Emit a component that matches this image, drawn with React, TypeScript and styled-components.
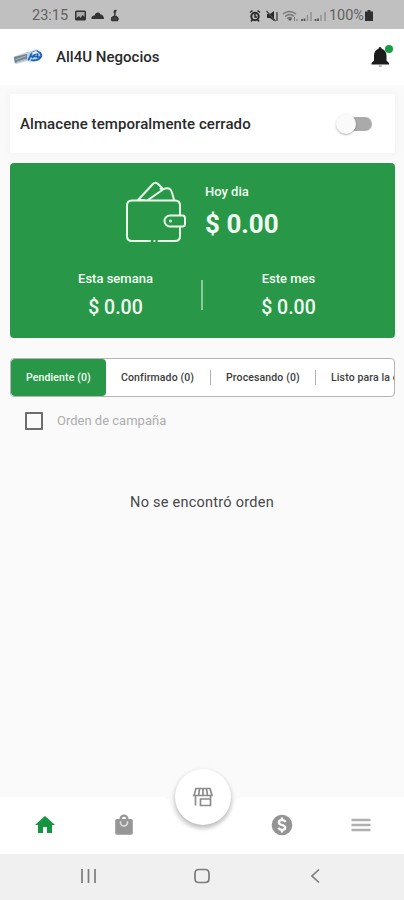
import React from "react";
import styled, { createGlobalStyle } from "styled-components";

const GREEN = "#289848";

const GlobalStyle = createGlobalStyle`
  * { box-sizing: border-box; }
  html, body { margin: 0; padding: 0; }
  body { font-family: Roboto, "Liberation Sans", sans-serif; color: #1d1d1d; background: #fafafa; }
`;

const Screen = styled.div`
  width: 404px;
  height: 900px;
  display: flex;
  flex-direction: column;
  background: #fafafa;
  overflow: hidden;
`;

const StatusBar = styled.header`
  height: 29px;
  flex: none;
  display: flex;
  align-items: center;
  justify-content: space-between;
  padding: 2px 31px 0 32px;
  background: #c0c0c0;
  color: #606060;
  font-size: 14.5px;
`;

const StatusGroup = styled.div<{ $gap: number }>`
  display: flex;
  align-items: center;
  gap: ${(p) => p.$gap}px;
`;

const StatusText = styled.span`
  line-height: 18px;
`;

const TitleBar = styled.div`
  height: 56px;
  flex: none;
  display: flex;
  align-items: center;
  padding: 0 11px 0 13px;
  background: #fff;
`;

const Title = styled.h1`
  flex: 1;
  margin: 0 0 0 12px;
  font-size: 15px;
  font-weight: 500;
  line-height: 20px;
  letter-spacing: 0.02px;
  color: #2a2a2a;
`;

const BellButton = styled.div`
  position: relative;
  width: 24px;
  height: 24px;
`;

const BellDot = styled.span`
  position: absolute;
  top: 0;
  right: 0;
  width: 8px;
  height: 8px;
  border-radius: 50%;
  background: #159d43;
`;

const Content = styled.main`
  flex: 1;
  display: flex;
  flex-direction: column;
  padding: 9px 9px 0 10px;
`;

const StoreCard = styled.section`
  height: 59px;
  display: flex;
  align-items: center;
  justify-content: space-between;
  padding: 0 23px 0 10px;
  background: #fff;
  border-radius: 2px;
  box-shadow: 0 0 6px 2px #f4f4f4;
  font-size: 15px;
  font-weight: 500;
  letter-spacing: 0.08px;
  color: #2a2a2a;
`;

const Track = styled.div`
  position: relative;
  width: 33px;
  height: 14px;
  border-radius: 7px;
  background: #aaa;
`;

const Knob = styled.span`
  position: absolute;
  left: -3px;
  top: -3px;
  width: 20px;
  height: 20px;
  border-radius: 50%;
  background: #fafafa;
  box-shadow: 0 1px 2px rgba(0, 0, 0, 0.3);
`;

const Earnings = styled.section`
  height: 175px;
  margin-top: 10px;
  padding-top: 17px;
  border-radius: 4px;
  background: ${GREEN};
  color: #f2fff2;
`;

const Today = styled.div`
  display: flex;
  height: 66px;
  padding-left: 115px;
  gap: 18px;
`;

const Amounts = styled.div<{ $align: string }>`
  display: flex;
  flex-direction: column;
  align-items: ${(p) => p.$align};
`;

const AmountLabel = styled.span`
  font-size: 13px;
  font-weight: 500;
  line-height: 16px;
  margin-top: 4px;
`;

const Amount = styled.span<{ $big?: boolean }>`
  font-size: ${(p) => (p.$big ? 26 : 19.5)}px;
  font-weight: ${(p) => (p.$big ? 700 : 500)};
  line-height: ${(p) => (p.$big ? 34 : 24)}px;
  margin-top: ${(p) => (p.$big ? 7 : 9)}px;
`;

const Periods = styled.div`
  display: grid;
  grid-template-columns: 1fr 2px 1fr;
  padding: 21px 21px 0 20px;
`;

const PeriodDivider = styled.span`
  height: 30px;
  margin-top: 13px;
  background: #8acb9a;
`;

const Tabs = styled.nav`
  width: 385px;
  height: 39px;
  margin-top: 20px;
  flex: none;
  display: flex;
  overflow: hidden;
  border: 1px solid #b5b5b5;
  border-radius: 4px;
  background: #fff;
`;

const Tab = styled.div<{ $active?: boolean; $width: number }>`
  flex: none;
  display: flex;
  align-items: center;
  width: ${(p) => p.$width}px;
  padding-left: 15px;
  white-space: nowrap;
  font-size: 10.5px;
  font-weight: 500;
  letter-spacing: 0.13px;
  border-radius: ${(p) => (p.$active ? 4 : 0)}px;
  background: ${(p) => (p.$active ? GREEN : "transparent")};
  color: ${(p) => (p.$active ? "#f4fff4" : "#3c3c3c")};
`;

const TabDivider = styled.span`
  align-self: center;
  flex: none;
  width: 1px;
  height: 15px;
  background: #b0b0b0;
`;

const CampaignRow = styled.div`
  display: flex;
  align-items: center;
  height: 47px;
  padding-left: 15px;
  gap: 14px;
  color: #adadad;
  font-size: 13px;
`;

const CheckBox = styled.span`
  width: 18px;
  height: 18px;
  border: 2px solid #6d6d6d;
  border-radius: 1px;
`;

const Empty = styled.p`
  margin: 49px 1px 0 0;
  text-align: center;
  font-size: 14.5px;
  line-height: 20px;
  color: #484848;
  letter-spacing: 0.25px;
`;

const BottomBar = styled.nav`
  position: relative;
  height: 57px;
  flex: none;
  display: grid;
  grid-template-columns: repeat(5, 1fr);
  place-items: center;
  padding: 0 4px 2px 6px;
`;

const BarShape = styled.svg`
  position: absolute;
  inset: 0;
`;

const NavItem = styled.div`
  position: relative;
  display: flex;
`;

const StoreButton = styled.div`
  position: relative;
  top: -28px;
  width: 56px;
  height: 56px;
  display: flex;
  align-items: center;
  justify-content: center;
  border-radius: 50%;
  background: #fff;
  box-shadow: 0 3px 5px rgba(0, 0, 0, 0.25), 0 0 4px rgba(0, 0, 0, 0.05);
`;

const SystemBar = styled.footer`
  height: 46px;
  flex: none;
  display: flex;
  align-items: center;
  justify-content: space-between;
  padding: 0 79px 2px 78px;
  background: #f0f0f0;
`;

const StatusLeftIcons = () => (
  <svg width="48" height="14" viewBox="0 0 48 14">
    <rect x="2" y="1.500" width="11" height="10" rx="1.500" fill="#333" />
    <path d="M3.500 3h8v5l-2-2-2 3-1.500-2-2.500 2z" fill="#aaa" />
    <path d="M18.500 10c-.5-2 1-3.500 3-3.500 1-3.500 5-4 6-1 2-.5 3.500 2 3.500 4.500z" fill="#333" />
    <path d="M43.500 1.500c-2.500-.5-3 2-1.500 3l-.5 3M40 7.500h3.500M39 11.500c-1.500-2 0-4 2.500-4s5 2 3 4z" fill="#444" stroke="#333" strokeWidth="1.300" />
  </svg>
);

const StatusRightIcons = () => (
  <svg width="80" height="14" viewBox="0 0 80 14">
    <circle cx="7" cy="7.500" r="3.700" fill="none" stroke="#292929" strokeWidth="2" />
    <path d="M2 3.500 4.500 1.500M12 3.500 9.500 1.500M3 12.500l1.500-2M11 12.500l-1.500-2M7 5v3h2" fill="none" stroke="#292929" strokeWidth="1.500" />
    <path d="M19 5h3l4-3v10l-4-3h-3z" fill="#292929" />
    <path d="M18.500 2l9 10M29 3v9" stroke="#484848" strokeWidth="1.400" />
    <path d="M35 5q6-5 13 0M37 7.500q5-4 9 0M39 9.500q3-2 5 0" fill="none" stroke="#777" strokeWidth="1.500" />
    <path d="M42 12l-2-2q2-1.500 4 0z" fill="#555" />
    <path d="M46.500 8v4M49 10v2" stroke="#777" />
    <path d="M54 12v-2M56.500 12V9.500M67.500 12v-2M70 12V9.500" stroke="#555" strokeWidth="1.800" />
    <path d="M59.500 12V6M63 12V3M73 12V6M77 12V3" stroke="#909090" strokeWidth="1.500" />
  </svg>
);

const Battery = () => (
  <svg width="8" height="13" viewBox="0 0 8 13">
    <path d="M2.500 1h3v1.500H8V12H0V2.500h2.500z" fill="#303030" />
  </svg>
);

const Logo = () => (
  <svg width="31" height="20" viewBox="0 0 31 20">
    <path d="M1 9.500 14 5l5-1 4-2 6 4 1 3-5 5-7 1-4-1L3 17 1 15z" fill="#b8d2ea" />
    <path d="M1 10 14 7v5L2 16z" fill="#77838c" />
    <path d="M3 12.500 13 9M4 15l9-3" stroke="#aebbc2" strokeWidth="1" />
    <path d="M15 13c2-1 2-5 4-7 4-3 9-1 9 2 1 4-5 6-10 5M19 11l5-6 1 6m-8-2 10 1" fill="none" stroke="#1c62b5" strokeWidth="1.700" />
    <path d="m18 6 5-2 3 2-5 1z" fill="#eef8ff" />
  </svg>
);

const Bell = () => (
  <svg width="24" height="24" viewBox="0 0 24 24">
    <path d="M11 2c-1 0-1.400.7-1.400 1.800C6.500 4.700 5 7.200 5 10.500v5L2.500 18v1.500H20V18l-2.500-2.500v-5c0-3.300-1.700-5.800-4.900-6.700C12.600 2.700 12 2 11 2z" fill="#1c1c1c" />
    <path d="M9.500 20.300h3.500q-.4 2-1.800 2t-1.700-2z" fill="#aaa" />
  </svg>
);

const Wallet = () => (
  <svg width="62" height="66" viewBox="0 0 62 66" fill="none" stroke="#e9ffea" strokeWidth="2" strokeLinecap="round" strokeLinejoin="round">
    <path d="M25 61H7q-5 0-5-5V25.500q0-5 5-5h43q5 0 5 5V35M55 47v9q0 5-5 5H33.500M29.300 61h.2" />
    <path d="M60 38v6q0 2.500-2.500 2.500H45a5.500 5.500 0 0 1 0-11h12.500Q60 35.500 60 38z" />
    <path d="M13 20 27.500 4.500q2.500-3 5.500-.5l4.500 4.300M23 20 38 9.500q4.500-2.500 7.500 0 1.500 2 3.500 10.500M13 20 19.500 20M38 9.500 35.500 8.500" />
    <circle cx="45.500" cy="41" r=".5" fill="#e9ffea" />
  </svg>
);

const HomeIcon = () => (
  <svg width="24" height="24" viewBox="0 0 24 24">
    <path d="M10 20v-6h4v6h5v-8h3L12 3 2 12h3v8z" fill="#159441" />
  </svg>
);

const BagIcon = () => (
  <svg width="24" height="24" viewBox="0 0 24 24">
    <path d="M5 6h2.500a4.500 4.500 0 0 1 9 0H19a1.800 1.800 0 0 1 1.800 1.800V20A1.800 1.800 0 0 1 19 21.800H5A1.800 1.800 0 0 1 3.200 20V7.800A1.800 1.800 0 0 1 5 6z" fill="#969696" />
    <path d="M9.800 6a2.200 2.200 0 0 1 4.400 0z" fill="#fff" />
    <path d="M8.500 8.200v1.300a3.500 3.500 0 0 0 7 0V8.200" fill="none" stroke="#dedede" strokeWidth="1.600" />
  </svg>
);

const StoreIcon = () => (
  <svg width="22" height="22" viewBox="0 0 22 22" fill="none" stroke="#8c8c8c" strokeWidth="1.700">
    <path d="M4 2.500h14L20 9.500H2zM7.500 3 6.500 9.500M11 3v7M14.500 3 15.500 9.500M3.500 10v9.500M8.500 19.500V13h10v6.500zM18.500 10v3" />
  </svg>
);

const MoneyIcon = () => (
  <svg width="24" height="24" viewBox="0 0 24 24">
    <circle cx="12" cy="12" r="10.300" fill="#949494" />
    <path d="M12 4.500v3M12 16.500v3M15.500 8.900Q14.500 7.200 12 7.200C7.800 7.200 7.800 11 12 12s4.200 4.800 0 4.800q-2.700 0-3.700-2" fill="none" stroke="#fff" strokeWidth="2.300" />
  </svg>
);

const MenuIcon = () => (
  <svg width="24" height="24" viewBox="0 0 24 24">
    <path d="M2.500 7h19M2.500 12h19M2.500 17h19" stroke="#b0b0b0" strokeWidth="2.300" />
  </svg>
);

const SysIcon = ({ d }: { d: string }) => (
  <svg width="20" height="20" viewBox="0 0 20 20" fill="none" stroke="#7c7c7c" strokeWidth="1.700">
    <path d={d} />
  </svg>
);

export default function App() {
  return (
    <>
      <GlobalStyle />
      <Screen>
        <StatusBar>
          <StatusGroup $gap={5}>
            <StatusText>23:15</StatusText>
            <StatusLeftIcons />
          </StatusGroup>
          <StatusGroup $gap={1}>
            <StatusRightIcons />
            <StatusText>100%</StatusText>
            <Battery />
          </StatusGroup>
        </StatusBar>
        <TitleBar>
          <Logo />
          <Title>All4U Negocios</Title>
          <BellButton><Bell /><BellDot /></BellButton>
        </TitleBar>
        <Content>
          <StoreCard>
            <span>Almacene temporalmente cerrado</span>
            <Track><Knob /></Track>
          </StoreCard>
          <Earnings>
            <Today>
              <Wallet />
              <Amounts $align="flex-start">
                <AmountLabel>Hoy dia</AmountLabel>
                <Amount $big>$ 0.00</Amount>
              </Amounts>
            </Today>
            <Periods>
              <Amounts $align="center">
                <AmountLabel>Esta semana</AmountLabel>
                <Amount>$ 0.00</Amount>
              </Amounts>
              <PeriodDivider />
              <Amounts $align="center">
                <AmountLabel>Este mes</AmountLabel>
                <Amount>$ 0.00</Amount>
              </Amounts>
            </Periods>
          </Earnings>
          <Tabs>
            <Tab $active $width={95}>Pendiente (0)</Tab>
            <Tab $width={104}>Confirmado (0)</Tab>
            <TabDivider />
            <Tab $width={104}>Procesando (0)</Tab>
            <TabDivider />
            <Tab $width={140}>Listo para la entrega (0)</Tab>
          </Tabs>
          <CampaignRow>
            <CheckBox />
            <span>Orden de campaña</span>
          </CampaignRow>
          <Empty>No se encontró orden</Empty>
        </Content>
        <BottomBar>
          <BarShape width="404" height="57" viewBox="0 0 404 57">
            <path d="M0 0H160Q168 0 170 6C177 42 227 42 234 6Q236 0 244 0H404V57H0z" fill="#fff" />
          </BarShape>
          <NavItem><HomeIcon /></NavItem>
          <NavItem><BagIcon /></NavItem>
          <StoreButton><StoreIcon /></StoreButton>
          <NavItem><MoneyIcon /></NavItem>
          <NavItem><MenuIcon /></NavItem>
        </BottomBar>
        <SystemBar>
          <SysIcon d="M4 3v14M10.500 3v14M17 3v14" />
          <SysIcon d="M7 3.500h6q4 0 4 4v5q0 4-4 4H7q-4 0-4-4v-5q0-4 4-4z" />
          <SysIcon d="M14 3.500 7 10l7 6.500" />
        </SystemBar>
      </Screen>
    </>
  );
}
